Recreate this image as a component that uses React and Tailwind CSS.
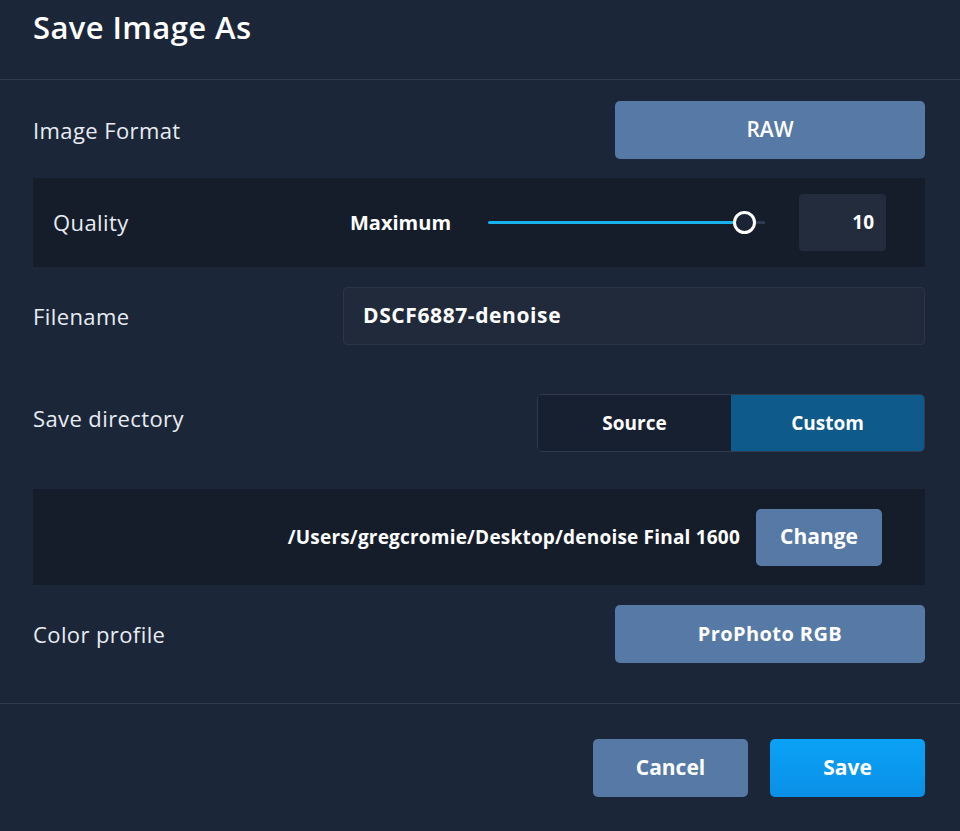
export default function App() {
  return (
    <div className="w-[960px] h-[831px] bg-[#1c2639] text-white overflow-hidden" style={{ fontFamily: '"Open Sans", "Liberation Sans", sans-serif' }}>
      <div className="h-[80px] border-b border-[#2e3b50] px-[33px] pt-[7px]">
        <h1 className="text-[31px] font-semibold tracking-[0.4px] leading-[40px]">Save Image As</h1>
      </div>

      <div className="pl-[33px] pr-[35px] pt-[21px]">
        <div className="flex items-center justify-between h-[58px]">
          <span className="text-[22px] tracking-[0.4px] text-[#e8ecf2]">Image Format</span>
          <button className="w-[310px] h-[58px] rounded-[5px] bg-[#5679a6] text-[21px] font-semibold">RAW</button>
        </div>

        <div className="mt-[19px] h-[89px] bg-[#151d2b] flex items-center pl-[20px] pr-[39px]">
          <span className="w-[297px] text-[22px] tracking-[0.4px] text-[#e8ecf2]">Quality</span>
          <span className="w-[138px] text-[20px] font-bold">Maximum</span>
          <div className="relative w-[280px] h-[24px] flex items-center">
            <div className="w-[257px] h-[3px] bg-[#19b2ec] rounded-full" />
            <div className="w-[20px] h-[3px] bg-[#2c3a4f]" />
            <div className="absolute left-[245px] top-0 w-[23px] h-[23px] rounded-full border-[3px] border-white bg-[#1a2434]" />
          </div>
          <div className="ml-auto w-[87px] h-[57px] rounded-[4px] bg-[#222c3d] flex items-center justify-end pr-[12px] text-[19px] font-bold">10</div>
        </div>

        <div className="mt-[20px] flex items-center justify-between h-[58px]">
          <span className="text-[22px] tracking-[0.4px] text-[#e8ecf2]">Filename</span>
          <div className="w-[582px] h-[58px] rounded-[4px] bg-[#202a3b] border border-[#2a3548] flex items-center pl-[19px] text-[21px] tracking-[0.6px] font-bold">DSCF6887-denoise</div>
        </div>

        <div className="mt-[49px] flex items-center justify-between h-[58px]">
          <span className="text-[22px] tracking-[0.4px] text-[#e8ecf2] -mt-[10px]">Save directory</span>
          <div className="w-[388px] h-[58px] rounded-[5px] border border-[#2f3a4c] flex overflow-hidden">
            <div className="flex-1 flex items-center justify-center text-[19px] font-bold bg-[#172031]">Source</div>
            <div className="flex-1 flex items-center justify-center text-[19px] font-bold bg-[#0d5a8b]">Custom</div>
          </div>
        </div>

        <div className="mt-[37px] h-[96px] bg-[#151d2b] flex items-center justify-end pr-[43px] gap-[16px]">
          <span className="text-[19px] tracking-[0.2px] font-bold">/Users/gregcromie/Desktop/denoise Final 1600</span>
          <button className="w-[126px] h-[57px] rounded-[5px] bg-[#5679a6] text-[21px] font-bold">Change</button>
        </div>

        <div className="mt-[20px] flex items-center justify-between h-[58px]">
          <span className="text-[22px] tracking-[0.4px] text-[#e8ecf2]">Color profile</span>
          <button className="w-[310px] h-[58px] rounded-[5px] bg-[#5679a6] text-[20px] tracking-[0.4px] font-bold">ProPhoto RGB</button>
        </div>
      </div>

      <div className="mt-[40px] border-t border-[#2e3b50] px-[35px] pt-[35px] flex justify-end gap-[22px]">
        <button className="w-[155px] h-[58px] rounded-[5px] bg-[#5679a6] text-[21px] font-bold">Cancel</button>
        <button className="w-[155px] h-[58px] rounded-[5px] bg-gradient-to-b from-[#0aa2f6] to-[#0a90e6] text-[21px] font-bold">Save</button>
      </div>
    </div>
  );
}
